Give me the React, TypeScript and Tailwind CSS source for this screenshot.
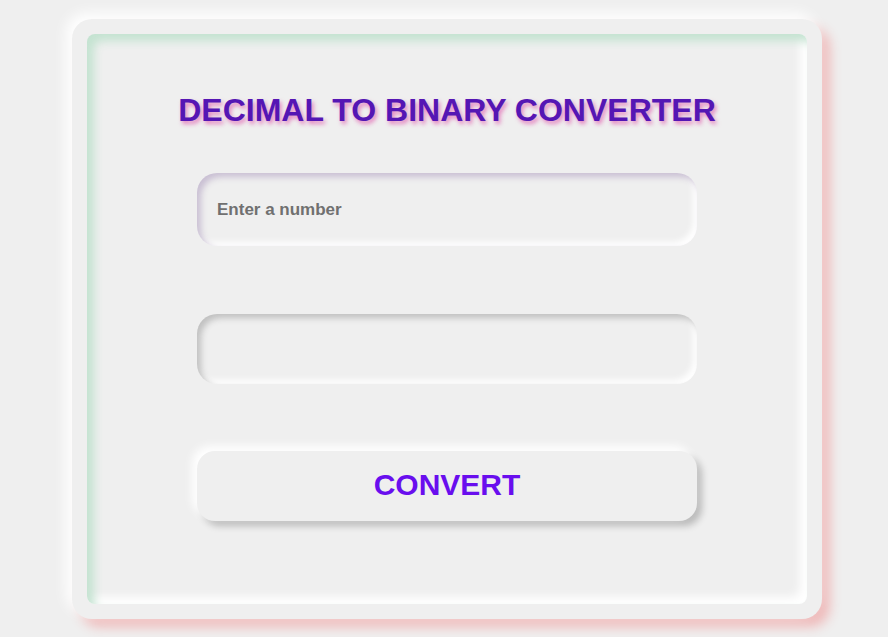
import React, { useState } from 'react';

const App: React.FC = () => {
  const [value, setValue] = useState('');
  const [result, setResult] = useState('');

  const handleConvert = () => {
    const n = parseInt(value, 10);
    setResult(isNaN(n) ? '' : n.toString(2));
  };

  return (
    <div className="w-full min-h-[637px] bg-[#efefef] flex justify-center pl-[6px] pt-[19px] font-['Liberation_Sans',Arial,sans-serif]">
      {/* 外框 */}
      <div className="w-[750px] h-[600px] rounded-[20px] bg-[#efefef] p-[15px] shadow-[-6px_-6px_14px_#ffffff,8px_8px_12px_#efbaba]">
        {/* 内框 */}
        <div className="w-full h-full rounded-[8px] bg-[#efefef] flex flex-col items-center pt-[60px] shadow-[inset_7px_7px_10px_#c4e3d1,inset_-7px_-7px_10px_#ffffff]">
          <h1 className="text-[32px] leading-none font-bold text-[#5516b4] [text-shadow:2px_3px_4px_rgba(222,60,160,0.6)]">
            DECIMAL TO BINARY CONVERTER
          </h1>

          <input
            type="text"
            value={value}
            onChange={e => setValue(e.target.value)}
            placeholder="Enter a number"
            className="mt-[47px] w-[500px] h-[73px] rounded-[20px] bg-[#efefef] px-5 text-[17px] font-bold text-[#555] outline-none placeholder:text-[#707070] shadow-[inset_4px_4px_6px_#c9bfd3,inset_-4px_-4px_6px_#ffffff]"
          />

          <input
            type="text"
            value={result}
            readOnly
            className="mt-[68px] w-[500px] h-[70px] rounded-[20px] bg-[#efefef] px-5 text-[17px] font-bold text-[#555] outline-none shadow-[inset_4px_4px_6px_#c0c0c0,inset_-4px_-4px_6px_#ffffff]"
          />

          <button
            onClick={handleConvert}
            className="mt-[67px] w-[500px] h-[70px] pb-[4px] rounded-[18px] bg-[#efefef] text-[30px] font-bold text-[#690eee] shadow-[-5px_-5px_10px_#ffffff,5px_5px_7px_rgba(0,0,0,0.22)]"
          >
            CONVERT
          </button>
        </div>
      </div>
    </div>
  );
};

export default App;
